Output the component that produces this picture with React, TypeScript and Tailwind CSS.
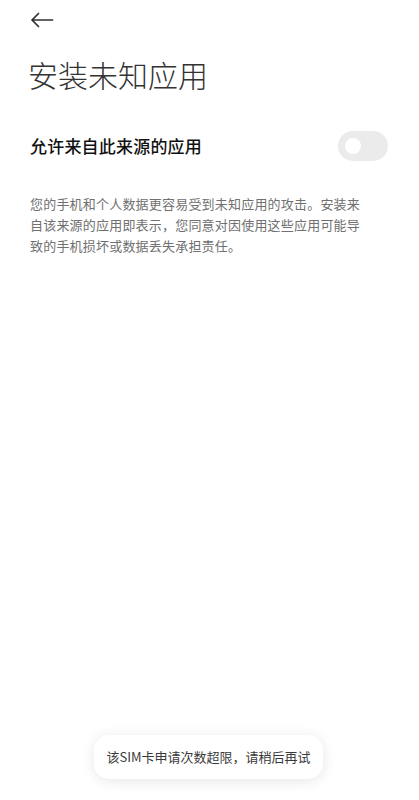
import React, { useState } from 'react';

const FONT = '"Noto Sans CJK SC", "Noto Sans", Roboto, sans-serif';

const BackArrow = () => (
  <svg width="24" height="16" viewBox="0 0 24 16" fill="none">
    <path
      d="M22.5 8H2M8.5 1.5L2 8l6.5 6.5"
      stroke="#2f2f2f"
      strokeWidth="1.7"
      strokeLinecap="round"
      strokeLinejoin="round"
    />
  </svg>
);

export default function App() {
  const [allowed, setAllowed] = useState(false);

  return (
    <div
      className="relative w-[419px] h-[800px] bg-white overflow-hidden text-[#333]"
      style={{ fontFamily: FONT }}
    >
      {/* header */}
      <div className="h-[40px] flex items-center pl-[30px]">
        <BackArrow />
      </div>

      <h1 className="mt-[16px] pl-[28px] text-[30px] leading-[36px] font-light text-[#333]">
        安装未知应用
      </h1>

      <div className="mt-[39px] pl-[30px] pr-[31px] h-[30px] flex items-center justify-between">
        <span className="text-[17px] leading-[24px] font-medium text-[#111] tracking-[0.2px]">
          允许来自此来源的应用
        </span>
        <button
          onClick={() => setAllowed(!allowed)}
          className={`w-[50px] h-[30px] rounded-full flex items-center px-[7px] ${
            allowed ? 'bg-[#3482ff] justify-end' : 'bg-[#ebebeb] justify-start'
          }`}
        >
          <span className="w-[16px] h-[16px] rounded-full bg-white block" />
        </button>
      </div>

      <p className="mt-[32px] ml-[30px] w-[335px] text-[13px] leading-[21px] tracking-[0.2px] text-[#707070]">
        您的手机和个人数据更容易受到未知应用的攻击。安装来自该来源的应用即表示，您同意对因使用这些应用可能导致的手机损坏或数据丢失承担责任。
      </p>

      {/* toast */}
      <div className="absolute left-[94px] top-[735px] w-[229px] h-[44px] rounded-[15px] bg-white shadow-[0_2px_14px_rgba(0,0,0,0.10)] flex items-center justify-center">
        <span className="text-[13px] text-[#3a3a3a]">该SIM卡申请次数超限，请稍后再试</span>
      </div>
    </div>
  );
}
